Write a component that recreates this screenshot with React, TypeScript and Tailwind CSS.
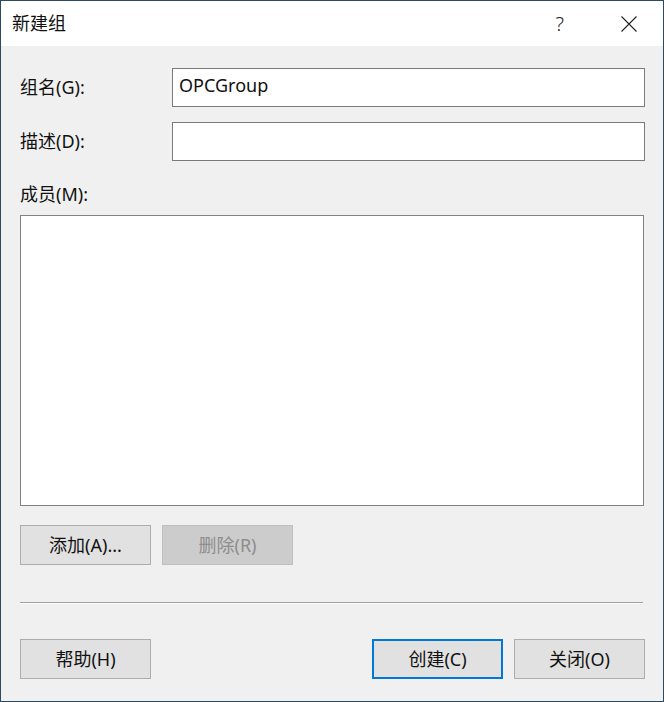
import React from "react";

const font = { fontFamily: "'Noto Sans', 'Noto Sans CJK SC', sans-serif" };

function Btn({
  children,
  className = "",
}: {
  children: React.ReactNode;
  className?: string;
}) {
  return (
    <div
      className={
        "flex h-[40px] w-[131px] items-center justify-center border border-[#adadad] bg-[#e1e1e1] text-[18px] text-[#111] " +
        className
      }
    >
      {children}
    </div>
  );
}

export default function App() {
  return (
    <div
      className="flex h-[702px] w-[664px] flex-col border border-[#2b4a60] bg-[#f0f0f0]"
      style={font}
    >
      {/* Title bar */}
      <div className="flex h-[45px] items-center bg-white pl-[11px] pr-[26px]">
        <span className="text-[18px] text-[#111]">新建组</span>
        <span className="ml-auto mr-[57px] text-[20px] font-light text-[#222]">?</span>
        <svg width="16" height="16" viewBox="0 0 16 16" className="text-[#222]">
          <path d="M0.5 0.5 L15.5 15.5 M15.5 0.5 L0.5 15.5" stroke="currentColor" strokeWidth="1.1" fill="none" />
        </svg>
      </div>

      {/* Content */}
      <div className="flex flex-1 flex-col pl-[19px] pr-[18px]">
        <div className="mt-[22px] flex items-center">
          <span className="w-[152px] text-[18px] text-[#111]">组名(G):</span>
          <div className="flex h-[39px] flex-1 items-center border border-[#7a7a7a] bg-white pl-[6px] pb-[4px] text-[18px] text-[#111]">
            OPCGroup
          </div>
        </div>
        <div className="mt-[15px] flex items-center">
          <span className="w-[152px] text-[18px] text-[#111]">描述(D):</span>
          <div className="h-[39px] flex-1 border border-[#7a7a7a] bg-white" />
        </div>
        <div className="mt-[21px] text-[18px] leading-[24px] text-[#111]">成员(M):</div>
        <div className="mt-[9px] mr-[1px] h-[291px] border border-[#828282] bg-white" />

        <div className="mt-[19px] flex gap-[11px]">
          <Btn>添加(A)...</Btn>
          <Btn className="!border-[#bfbfbf] !bg-[#cccccc] !text-[#8d8d8d]">删除(R)</Btn>
        </div>

        <div className="mt-[37px] mr-[2px] h-[2px] border-t border-[#a0a0a0] border-b border-b-white" />

        <div className="mt-[35px] flex gap-[11px]">
          <Btn>帮助(H)</Btn>
          <div className="flex-1" />
          <Btn className="!border-2 !border-[#0078d7]">创建(C)</Btn>
          <Btn className="w-[130px]">关闭(O)</Btn>
        </div>
      </div>
    </div>
  );
}
